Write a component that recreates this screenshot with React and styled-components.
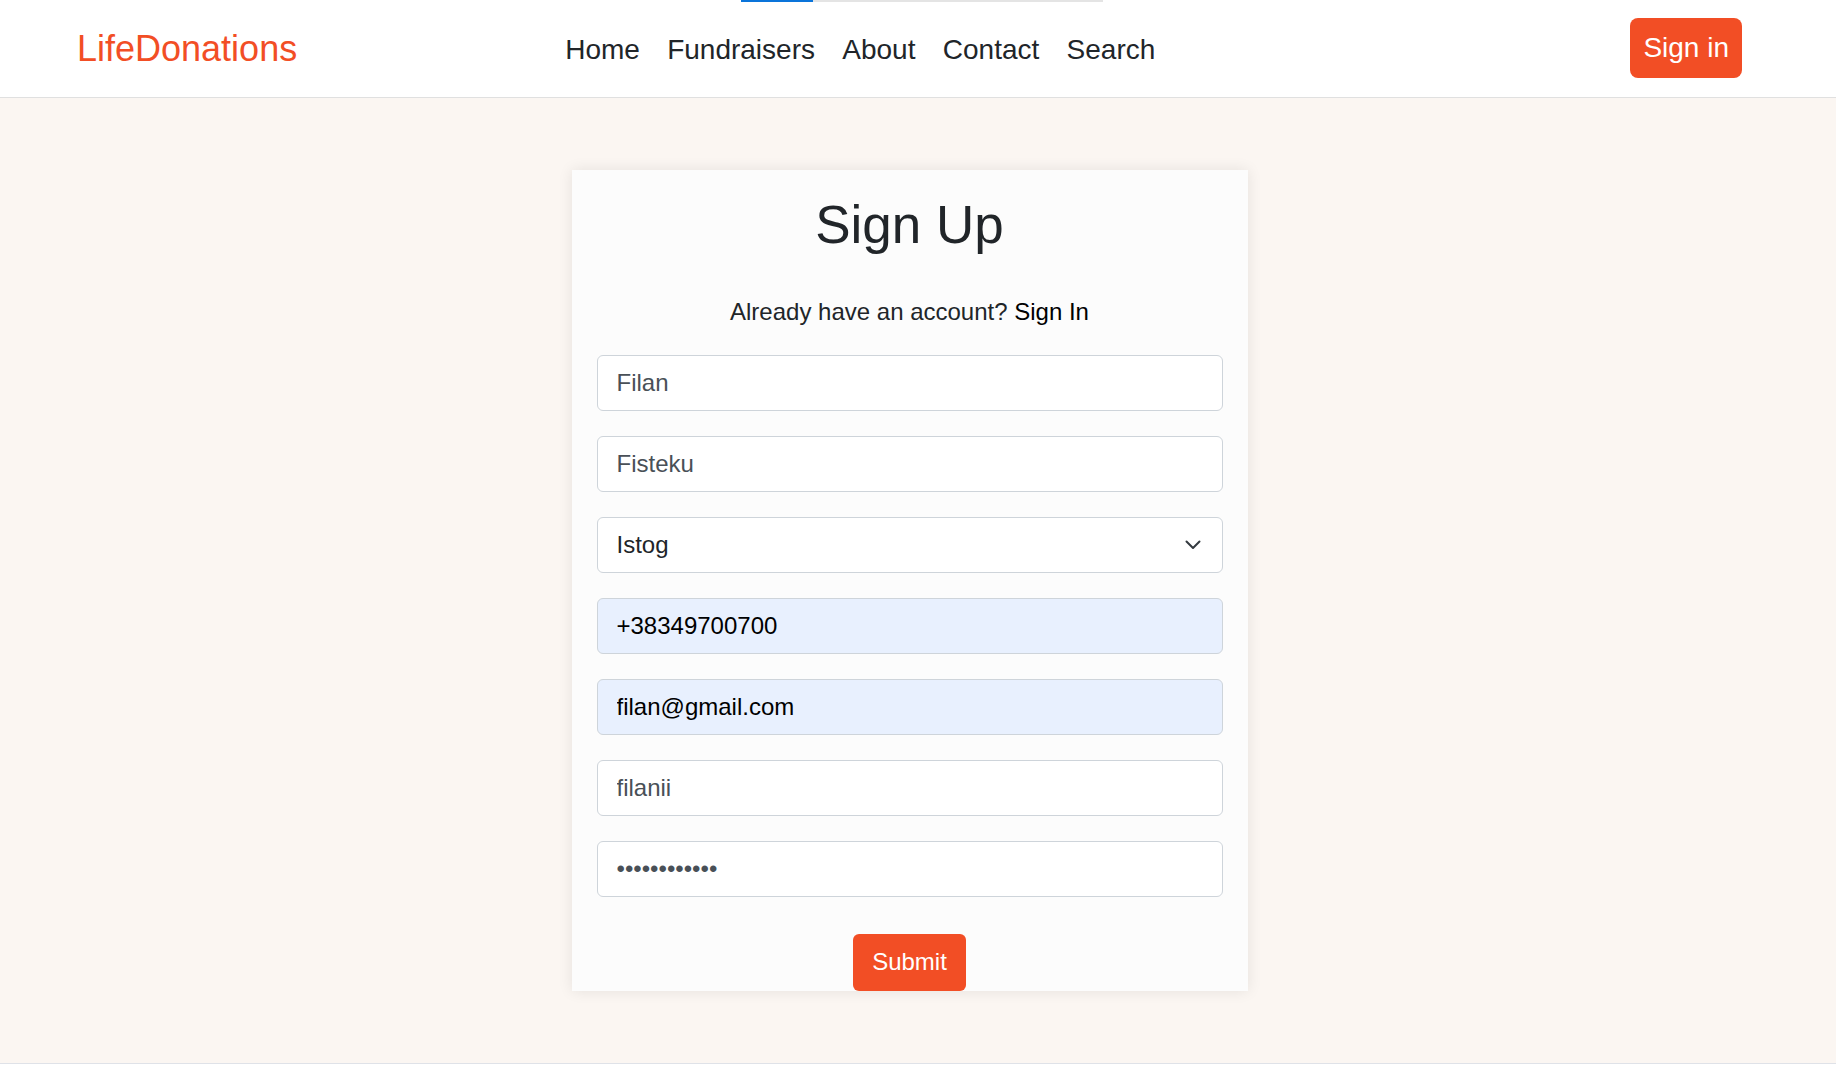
import React from "react";
import styled, { createGlobalStyle } from "styled-components";

const ORANGE = "#f24e25";

const GlobalStyle = createGlobalStyle`
  html, body { margin: 0; padding: 0; background: #ffffff; }
  body { font-family: "Liberation Sans", Arial, sans-serif; color: #212529; }
  * { box-sizing: border-box; }
`;

const Page = styled.div`
  position: relative;
  min-height: 100vh;
  display: flex;
  flex-direction: column;
`;

const LoadingTrack = styled.div`
  position: absolute;
  top: 0;
  left: 741px;
  width: 362px;
  height: 2px;
  background: #e4e4e4;
`;

const LoadingFill = styled.div`
  height: 100%;
  background: #0a74da;
`;

const Header = styled.header`
  height: 98px;
  display: flex;
  align-items: center;
  padding: 0 94px 0 77px;
  background: #ffffff;
  border-bottom: 1px solid #e0e0e0;
`;

const Brand = styled.a`
  font-size: 36px;
  color: ${ORANGE};
  text-decoration: none;
  line-height: 1;
`;

const Nav = styled.nav`
  display: flex;
  align-items: center;
  gap: 27.3px;
  margin-left: 268px;
  margin-top: 3px;
`;

const NavLink = styled.a`
  font-size: 28px;
  color: #212529;
  text-decoration: none;
  line-height: 1.2;
`;

const SignInButton = styled.button`
  margin-left: auto;
  margin-bottom: 2px;
  height: 60px;
  padding: 0 13px;
  border: none;
  border-radius: 8px;
  background: ${ORANGE};
  color: #ffffff;
  font-family: inherit;
  font-size: 28px;
  line-height: 1;
  cursor: pointer;
`;

const Main = styled.main`
  flex: none;
  background: #fbf6f2;
  display: flex;
  justify-content: center;
  padding: 72px 17px 72px 0;
`;

const Card = styled.section`
  width: 676px;
  padding: 23px 25px 0;
  background: #fcfcfc;
  box-shadow: 0 0 14px rgba(0, 0, 0, 0.09);
  display: flex;
  flex-direction: column;
`;

const Title = styled.h1`
  margin: 0 0 37px;
  font-size: 53px;
  font-weight: 400;
  line-height: 1.2;
  text-align: center;
  color: #212529;
`;

const Prompt = styled.p`
  margin: 0 0 25px;
  font-size: 24px;
  line-height: 1.5;
  text-align: center;
  color: #212529;
`;

const PromptLink = styled.a`
  color: #000000;
  text-decoration: none;
`;

const Form = styled.form`
  display: flex;
  flex-direction: column;
  gap: 25px;
`;

const Field = styled.input`
  width: 100%;
  height: 56px;
  padding: 0 19px;
  font-family: inherit;
  font-size: 24px;
  border: 1px solid #ced4da;
  border-radius: 6px;
  outline: none;
  background: ${(p) => (p.$autofill ? "#e8f0fe" : "#ffffff")};
  color: ${(p) => (p.$autofill ? "#000000" : "#495057")};
`;

const SelectWrap = styled.div`
  position: relative;
`;

const Select = styled.select`
  width: 100%;
  height: 56px;
  padding: 0 50px 0 19px;
  font-family: inherit;
  font-size: 24px;
  border: 1px solid #ced4da;
  border-radius: 6px;
  outline: none;
  background: #ffffff;
  color: #212529;
  appearance: none;
  -webkit-appearance: none;
`;

const Chevron = styled.svg`
  position: absolute;
  right: 22px;
  top: 50%;
  transform: translateY(-50%);
  pointer-events: none;
`;

const SubmitButton = styled.button`
  align-self: center;
  margin-top: 12px;
  width: 113px;
  height: 57px;
  border: none;
  border-radius: 6px;
  background: ${ORANGE};
  color: #ffffff;
  font-family: inherit;
  font-size: 24px;
  cursor: pointer;
`;

const Footer = styled.footer`
  flex: 1;
  border-top: 1px solid #dfe2e8;
  background: #ffffff;
`;

export default function App() {
  const noop = () => {};
  return (
    <>
      <GlobalStyle />
      <Page>
        <LoadingTrack>
          <LoadingFill style={{ width: "72px" }} />
        </LoadingTrack>
        <Header>
          <Brand href="#">LifeDonations</Brand>
          <Nav>
            <NavLink href="#">Home</NavLink>
            <NavLink href="#">Fundraisers</NavLink>
            <NavLink href="#">About</NavLink>
            <NavLink href="#">Contact</NavLink>
            <NavLink href="#">Search</NavLink>
          </Nav>
          <SignInButton>Sign in</SignInButton>
        </Header>
        <Main>
          <Card>
            <Title>Sign Up</Title>
            <Prompt>
              Already have an account? <PromptLink href="#">Sign In</PromptLink>
            </Prompt>
            <Form onSubmit={(e) => e.preventDefault()}>
              <Field type="text" value="Filan" onChange={noop} />
              <Field type="text" value="Fisteku" onChange={noop} />
              <SelectWrap>
                <Select value="Istog" onChange={noop}>
                  <option value="Istog">Istog</option>
                  <option value="Prishtinë">Prishtinë</option>
                  <option value="Pejë">Pejë</option>
                </Select>
                <Chevron width="16" height="10" viewBox="0 0 16 10" fill="none">
                  <path
                    d="M1.5 1.5 L8 8 L14.5 1.5"
                    stroke="#343a40"
                    strokeWidth="2"
                    strokeLinecap="round"
                    strokeLinejoin="round"
                  />
                </Chevron>
              </SelectWrap>
              <Field $autofill type="tel" value="+38349700700" onChange={noop} />
              <Field $autofill type="email" value="filan@gmail.com" onChange={noop} />
              <Field type="text" value="filanii" onChange={noop} />
              <Field type="password" value="filanii12345" onChange={noop} />
              <SubmitButton type="submit">Submit</SubmitButton>
            </Form>
          </Card>
        </Main>
        <Footer />
      </Page>
    </>
  );
}
